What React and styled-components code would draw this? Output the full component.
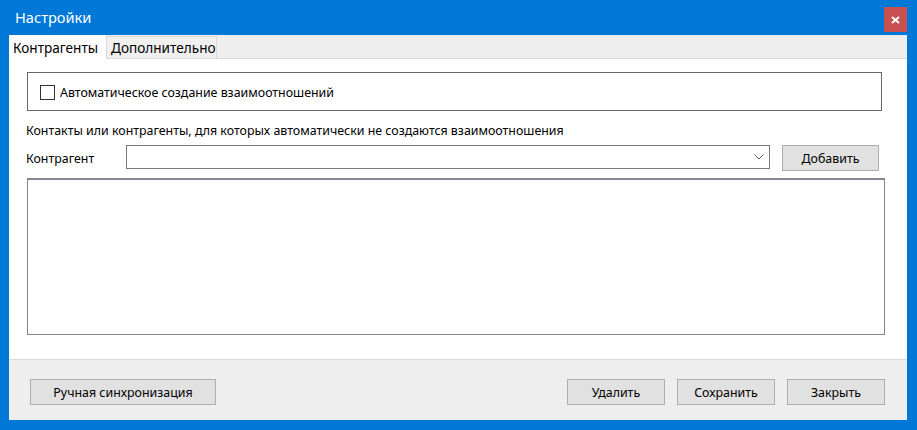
import styled, { createGlobalStyle } from 'styled-components';

const GlobalStyle = createGlobalStyle`
  html, body {
    margin: 0;
    padding: 0;
    background: #0078d7;
  }
  * {
    box-sizing: border-box;
  }
`;

const Window = styled.div`
  width: 917px;
  height: 430px;
  display: flex;
  flex-direction: column;
  background: #0078d7;
  font-family: "Noto Sans", "Open Sans", sans-serif;
  font-size: 12.4px;
  color: #000;
`;

const TitleBar = styled.div`
  height: 35px;
  display: flex;
  align-items: flex-start;
  justify-content: space-between;
  padding: 7px 10px 0 15px;
`;

const Title = styled.div`
  color: #fff;
  font-size: 14.6px;
  line-height: 20px;
`;

const CloseButton = styled.div`
  width: 23px;
  height: 25px;
  background: #c75050;
  color: #fff;
  display: flex;
  align-items: center;
  justify-content: center;
`;

const Client = styled.div`
  flex: 1;
  margin: 0 10px 10px 9px;
  display: flex;
  flex-direction: column;
  background: #eeeeee;
`;

const TabStrip = styled.div`
  height: 24px;
  display: flex;
  align-items: flex-end;
  border-bottom: 1px solid #d9d9d9;
`;

const Tab = styled.div`
  height: ${p => (p.$active ? '24px' : '22px')};
  margin-bottom: ${p => (p.$active ? '-1px' : '0')};
  width: ${p => p.$w};
  padding-left: 4px;
  display: flex;
  align-items: center;
  background: ${p => (p.$active ? '#fff' : '#f0f0f0')};
  border: ${p => (p.$active ? 'none' : '1px solid #d9d9d9')};
  border-bottom: none;
  font-size: 13.6px;
  position: relative;
  z-index: 1;
`;

const TabPage = styled.div`
  flex: 1;
  background: #fff;
  padding: 13px 22px 24px 17px;
  display: flex;
  flex-direction: column;
`;

const GroupBox = styled.div`
  height: 39px;
  margin: 0 0 0 1px;
  width: 855px;
  border: 1px solid #666;
  display: flex;
  align-items: center;
  padding: 1px 0 0 12px;
  gap: 5px;
`;

const CheckBox = styled.div`
  width: 15px;
  height: 15px;
  border: 1px solid #333;
  background: #fff;
`;

const Caption = styled.div`
  margin: 12px 0 0;
  line-height: 16px;
`;

const PickerRow = styled.div`
  display: flex;
  align-items: center;
  margin-top: 6px;
  height: 26px;
`;

const Label = styled.div`
  width: 100px;
`;

const Combo = styled.div`
  width: 644px;
  height: 24px;
  border: 1px solid #7a7a7a;
  display: flex;
  align-items: center;
  justify-content: flex-end;
  padding-right: 5px;
  margin-top: -2px;
`;

const Button = styled.div`
  width: ${p => p.$w || '98px'};
  height: 26px;
  background: #e1e1e1;
  border: 1px solid #adadad;
  display: flex;
  align-items: center;
  justify-content: center;
  margin-left: ${p => p.$ml || '0'};
`;

const ListBox = styled.div`
  flex: 1;
  margin: 7px 0 0 1px;
  width: 858px;
  border: 1px solid #828790;
  border-top-width: 2px;
`;

const Footer = styled.div`
  height: 61px;
  border-top: 1px solid #d9d9d9;
  display: flex;
  align-items: flex-start;
  padding: 19px 22px 0 21px;
`;

const Spacer = styled.div`
  flex: 1;
`;

const ButtonGroup = styled.div`
  display: flex;
  gap: 12px;
`;

export default function App() {
  return (
    <>
      <GlobalStyle />
      <Window>
        <TitleBar>
          <Title>Настройки</Title>
          <CloseButton>
            <svg width="9" height="8" viewBox="0 0 9 8">
              <path d="M1 1 L8 7 M8 1 L1 7" stroke="#fff" strokeWidth="2" />
            </svg>
          </CloseButton>
        </TitleBar>
        <Client>
          <TabStrip>
            <Tab $active $w="97px">Контрагенты</Tab>
            <Tab $w="111px">Дополнительно</Tab>
          </TabStrip>
          <TabPage>
            <GroupBox>
              <CheckBox />
              <span>Автоматическое создание взаимоотношений</span>
            </GroupBox>
            <Caption>Контакты или контрагенты, для которых автоматически не создаются взаимоотношения</Caption>
            <PickerRow>
              <Label>Контрагент</Label>
              <Combo>
                <svg width="10" height="6" viewBox="0 0 10 6">
                  <path d="M0.5 0.5 L5 5 L9.5 0.5" stroke="#555" fill="none" />
                </svg>
              </Combo>
              <Button $ml="12px" $w="97px">Добавить</Button>
            </PickerRow>
            <ListBox />
          </TabPage>
          <Footer>
            <Button $w="186px">Ручная синхронизация</Button>
            <Spacer />
            <ButtonGroup>
              <Button>Удалить</Button>
              <Button>Сохранить</Button>
              <Button>Закрыть</Button>
            </ButtonGroup>
          </Footer>
        </Client>
      </Window>
    </>
  );
}
